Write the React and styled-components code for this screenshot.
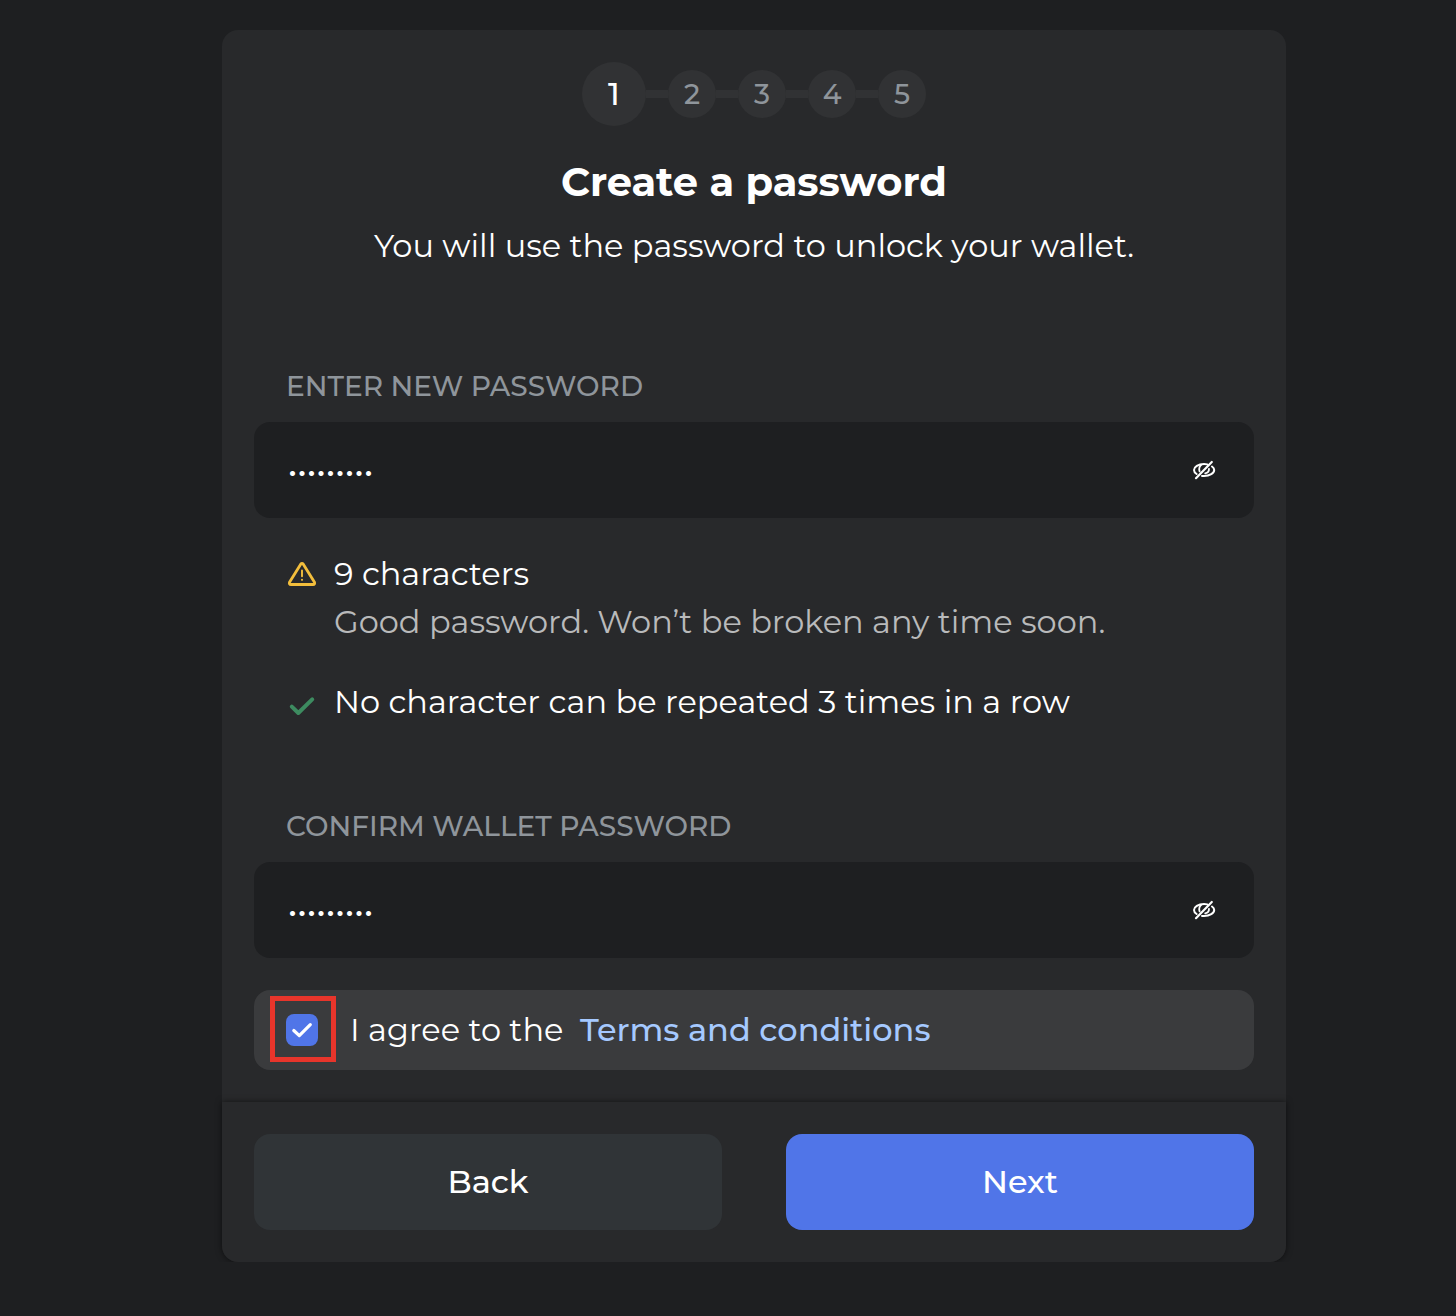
import React, { useState } from "react";
import styled, { createGlobalStyle } from "styled-components";

const GlobalStyle = createGlobalStyle`
  * { box-sizing: border-box; }
  body {
    margin: 0;
    background: #1e1f21;
    color: #fff;
    font-family: Montserrat, Inter, "Liberation Sans", sans-serif;
  }
`;

const Page = styled.main`
  width: 1456px;
  height: 1316px;
  padding: 30px 0 0 222px;
  overflow: hidden;
`;

const Card = styled.section`
  display: flex;
  flex-direction: column;
  width: 1064px;
  height: 1232px;
  border-radius: 16px;
  background: #28292b;
`;

const Content = styled.div`
  display: flex;
  flex-direction: column;
  height: 1072px;
  padding: 32px 32px 0;
`;

const Steps = styled.div`
  display: flex;
  align-items: center;
  justify-content: center;
  height: 64px;
`;

const Connector = styled.span`
  width: 22px;
  height: 8px;
  background: #313234;
`;

const Step = styled.span`
  display: flex;
  align-items: center;
  justify-content: center;
  width: ${(p) => (p.$active ? 64 : 48)}px;
  height: ${(p) => (p.$active ? 64 : 48)}px;
  border-radius: 50%;
  background: #313234;
  color: ${(p) => (p.$active ? "#fff" : "#8f959b")};
  font-size: ${(p) => (p.$active ? 32 : 28)}px;
  line-height: ${(p) => (p.$active ? 48 : 40)}px;
  font-weight: 500;
`;

const Text = styled.span`
  white-space: nowrap;
  letter-spacing: 0.02px;
`;

const Title = styled.h1`
  margin: 32px 0 0;
  text-align: center;
  font-size: 40px;
  line-height: 48px;
  font-weight: 700;
`;

const Subtitle = styled.p`
  margin: 16px 0 0;
  text-align: center;
  font-size: 32px;
  line-height: 48px;
`;

const Label = styled.label`
  margin: ${(p) => p.$top}px 0 0 32px;
  color: #8f959b;
  font-size: 28px;
  line-height: 40px;
  font-weight: 500;
`;

const Field = styled.div`
  display: flex;
  align-items: center;
  justify-content: space-between;
  height: 96px;
  margin-top: 16px;
  padding: 0 38px 0 34px;
  border-radius: 16px;
  background: #1e1f21;
`;

const PasswordInput = styled.input`
  width: 600px;
  height: 40px;
  padding: 4px 0 0;
  border: 0;
  outline: 0;
  background: transparent;
  color: #fff;
  font-family: Inter, sans-serif;
  font-size: 16px;
  letter-spacing: 0.5px;
`;

const IconButton = styled.button`
  display: flex;
  padding: 0;
  border: 0;
  background: transparent;
`;

const Rules = styled.div`
  display: flex;
  flex-direction: column;
  gap: 32px;
  margin: 32px 0 0 32px;
`;

const Rule = styled.div`
  display: flex;
  gap: 16px;
  font-size: 32px;
  line-height: 48px;
`;

const RuleIcon = styled.span`
  display: flex;
  align-items: center;
  width: 32px;
  height: ${(p) => p.$height}px;
`;

const RuleBody = styled.div`
  display: flex;
  flex-direction: column;
`;

const Hint = styled.div`
  color: #b9babb;
`;

const Agreement = styled.div`
  display: flex;
  align-items: center;
  gap: 16px;
  height: 80px;
  margin-top: 32px;
  padding-left: 16px;
  border-radius: 16px;
  background: #3a3b3d;
  font-size: 32px;
  line-height: 48px;
`;

const Highlight = styled.div`
  display: flex;
  align-items: center;
  justify-content: center;
  width: 66px;
  height: 66px;
  margin: -2px -2px 0 0;
  padding: 2px 2px 0 0;
  border: 5px solid #e8352b;
`;

const Checkbox = styled.button`
  display: flex;
  width: 32px;
  height: 32px;
  padding: 0;
  border: 0;
  border-radius: 8px;
  background: #5075e8;
`;

const TermsLink = styled.a`
  margin-left: 0.6px;
  color: #a5c9ff;
  font-weight: 500;
`;

const Footer = styled.footer`
  display: flex;
  gap: 64px;
  height: 160px;
  padding: 32px;
  border-radius: 0 0 16px 16px;
  background: #28292b;
  box-shadow: 0 0 6px rgba(0, 0, 0, 0.55);
  clip-path: inset(-8px -8px 0 -8px);
`;

const Button = styled.button`
  flex: 1;
  height: 96px;
  padding: 0;
  border: 0;
  border-radius: 16px;
  background: ${(p) => (p.$primary ? "#5075e8" : "#303437")};
  color: #fff;
  font-family: inherit;
  font-size: 32px;
  line-height: 48px;
  font-weight: 500;
`;

const EyeOff = () => (
  <svg width="24" height="20" viewBox="0 0 24 20" fill="none" stroke="#fff" strokeWidth="2" strokeLinecap="round">
    <path d="M4.6 14C2.9 12.9 2 11.2 2 10C2 7 6.2 4 12 4C13.2 4 14.3 4.1 15.3 4.4" />
    <path d="M20 6.5C21.5 7.5 22.2 8.8 22.2 10C22.2 13 17.8 16 12 16C11.3 16 10.7 16 10 15.9" />
    <path d="M7.6 11.4C6.8 9 7.4 6.5 9.2 4.8M17 8.8C17.1 11.2 15.6 12.9 13.2 13.3" strokeWidth="1.8" />
    <path d="M4 18.2L19.8 2" strokeWidth="2.2" />
  </svg>
);

const Warning = () => (
  <svg width="32" height="32" viewBox="0 0 32 32" fill="none" stroke="#f3be3c" strokeLinecap="round" strokeLinejoin="round">
    <path d="M14.7 6.2Q16 4.5 17.3 6.2L28.5 24.2Q29.2 26.5 27 26.5H5Q2.8 26.5 3.5 24.2Z" strokeWidth="2.8" />
    <path d="M16 12.5V18.3M16 21.6V21.9" strokeWidth="1.9" />
  </svg>
);

const Check = () => (
  <svg width="32" height="32" viewBox="0 0 32 32" fill="none" stroke="#3d8b60" strokeWidth="4" strokeLinecap="round" strokeLinejoin="round">
    <path d="M5.8 16.6L12.3 23L26.2 9.4" />
  </svg>
);

const CheckMark = () => (
  <svg width="32" height="32" viewBox="0 0 32 32" fill="none" stroke="#fff" strokeWidth="3.2" strokeLinecap="round" strokeLinejoin="round">
    <path d="M7.8 16.5L13.3 21.6L24.3 10.7" />
  </svg>
);

function PasswordField({ id }) {
  const [value, setValue] = useState("abcdefghi");
  const [visible, setVisible] = useState(false);
  return (
    <Field>
      <PasswordInput
        id={id}
        type={visible ? "text" : "password"}
        value={value}
        onChange={(e) => setValue(e.target.value)}
      />
      <IconButton onClick={() => setVisible(!visible)} aria-label="Toggle password visibility">
        <EyeOff />
      </IconButton>
    </Field>
  );
}

export default function App() {
  return (
    <Page>
      <GlobalStyle />
      <Card>
        <Content>
          <Steps>
            {[1, 2, 3, 4, 5].map((n) => (
              <React.Fragment key={n}>
                {n > 1 && <Connector />}
                <Step $active={n === 1}>{n}</Step>
              </React.Fragment>
            ))}
          </Steps>
          <Title>Create a password</Title>
          <Subtitle>You will use the password to unlock your wallet.</Subtitle>
          <Label htmlFor="new-password" $top={96}>ENTER NEW PASSWORD</Label>
          <PasswordField id="new-password" />
          <Rules>
            <Rule>
              <RuleIcon $height={48}><Warning /></RuleIcon>
              <RuleBody>
                <Text>9 characters</Text>
                <Hint>Good password. Won’t be broken any time soon.</Hint>
              </RuleBody>
            </Rule>
            <Rule>
              <RuleIcon $height={56}><Check /></RuleIcon>
              <Text>No character can be repeated 3 times in a row</Text>
            </Rule>
          </Rules>
          <Label htmlFor="confirm-password" $top={72}>CONFIRM WALLET PASSWORD</Label>
          <PasswordField id="confirm-password" />
          <Agreement>
            <Highlight>
              <Checkbox role="checkbox" aria-checked="true"><CheckMark /></Checkbox>
            </Highlight>
            <Text>I agree to the</Text>
            <TermsLink>Terms and conditions</TermsLink>
          </Agreement>
        </Content>
        <Footer>
          <Button>Back</Button>
          <Button $primary>Next</Button>
        </Footer>
      </Card>
    </Page>
  );
}
